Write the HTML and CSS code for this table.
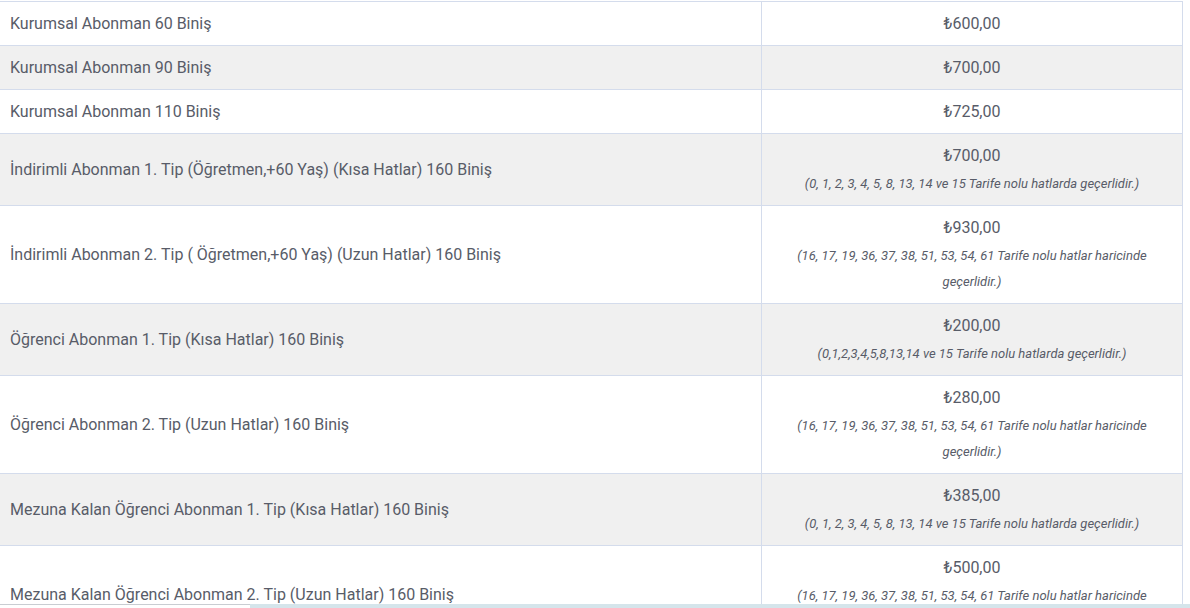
FILE: index.html
```html
<!DOCTYPE html>
<html lang="tr">
<head>
<meta charset="utf-8">
<title>Abonman Tarifeleri</title>
<link rel="stylesheet" href="styles.css">
</head>
<body>
<div class="wrap">
<table class="tariff">
  <tbody>
    <tr><td class="name">Kurumsal Abonman 60 Biniş</td><td class="price"><div class="amount">₺600,00</div></td></tr>
    <tr class="alt"><td class="name">Kurumsal Abonman 90 Biniş</td><td class="price"><div class="amount">₺700,00</div></td></tr>
    <tr><td class="name">Kurumsal Abonman 110 Biniş</td><td class="price"><div class="amount">₺725,00</div></td></tr>
    <tr class="alt"><td class="name">İndirimli Abonman 1. Tip (Öğretmen,+60 Yaş) (Kısa Hatlar) 160 Biniş</td><td class="price"><div class="amount">₺700,00</div><div class="note">(0, 1, 2, 3, 4, 5, 8, 13, 14 ve 15 Tarife nolu hatlarda geçerlidir.)</div></td></tr>
    <tr><td class="name">İndirimli Abonman 2. Tip ( Öğretmen,+60 Yaş) (Uzun Hatlar) 160 Biniş</td><td class="price"><div class="amount">₺930,00</div><div class="note">(16, 17, 19, 36, 37, 38, 51, 53, 54, 61 Tarife nolu hatlar haricinde geçerlidir.)</div></td></tr>
    <tr class="alt"><td class="name">Öğrenci Abonman 1. Tip (Kısa Hatlar) 160 Biniş</td><td class="price"><div class="amount">₺200,00</div><div class="note">(0,1,2,3,4,5,8,13,14 ve 15 Tarife nolu hatlarda geçerlidir.)</div></td></tr>
    <tr><td class="name">Öğrenci Abonman 2. Tip (Uzun Hatlar) 160 Biniş</td><td class="price"><div class="amount">₺280,00</div><div class="note">(16, 17, 19, 36, 37, 38, 51, 53, 54, 61 Tarife nolu hatlar haricinde geçerlidir.)</div></td></tr>
    <tr class="alt"><td class="name">Mezuna Kalan Öğrenci Abonman 1. Tip (Kısa Hatlar) 160 Biniş</td><td class="price"><div class="amount">₺385,00</div><div class="note">(0, 1, 2, 3, 4, 5, 8, 13, 14 ve 15 Tarife nolu hatlarda geçerlidir.)</div></td></tr>
    <tr><td class="name">Mezuna Kalan Öğrenci Abonman 2. Tip (Uzun Hatlar) 160 Biniş</td><td class="price"><div class="amount">₺500,00</div><div class="note">(16, 17, 19, 36, 37, 38, 51, 53, 54, 61 Tarife nolu hatlar haricinde geçerlidir.)</div></td></tr>
  </tbody>
</table>
</div>
<div class="bottom-bar"><div class="bar-left"></div><div class="bar-right"></div></div>
</body>
</html>
```
FILE: styles.css
```css
html, body {
  margin: 0;
  padding: 0;
  background: #ffffff;
  overflow: hidden;
}
body {
  font-family: Roboto, "Liberation Sans", sans-serif;
  color: #585c68;
  font-size: 16px;
}
.wrap {
  padding-top: 1px;
  margin-left: -1px;
}
.tariff {
  border-collapse: collapse;
  width: 1184px;
  table-layout: fixed;
}
.tariff td {
  border: 1px solid #d4dcec;
  padding: 10px 10px;
  vertical-align: middle;
  line-height: 23px;
}
.tariff td.name {
  width: 741px;
}
.tariff td.price {
  text-align: center;
}
.tariff tr.alt td {
  background: #f0f0f0;
}
.amount {
  line-height: 23px;
}
.note {
  font-size: 13px;
  font-style: italic;
  line-height: 26px;
  margin-top: 4px;
  margin-bottom: -2px;
}
.bottom-bar {
  position: fixed;
  left: 0;
  right: 0;
  bottom: 0;
  height: 4px;
  display: flex;
}
.bar-left {
  width: 250px;
  background: #ffffff;
  border-top: 1px solid #c9cdd2;
}
.bar-right {
  flex: 1;
  background: #d5e5eb;
}
```
